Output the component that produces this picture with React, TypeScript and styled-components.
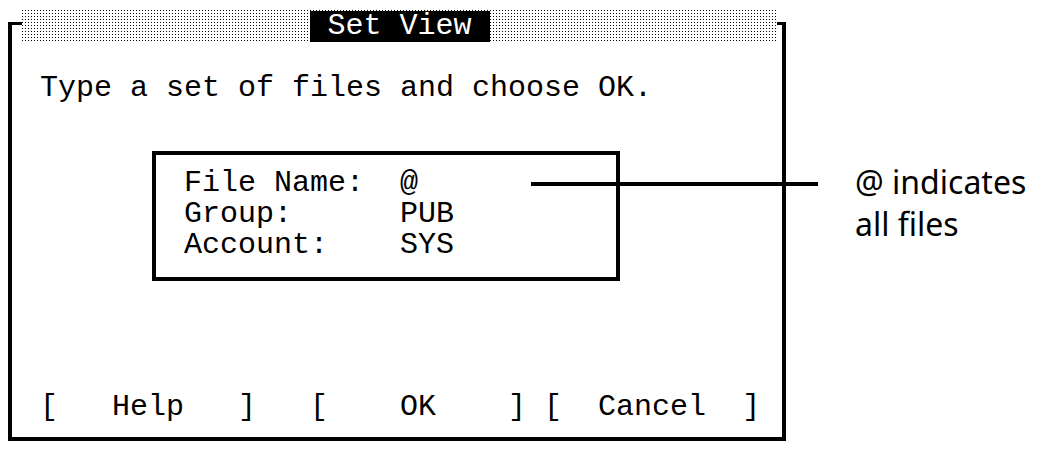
import React from "react";
import styled, { createGlobalStyle } from "styled-components";

const Global = createGlobalStyle`
  html, body { margin: 0; padding: 0; background: #fff; }
  #root { width: 1040px; height: 449px; }
`;

const Page = styled.div`
  position: relative;
  width: 1040px;
  height: 449px;
  display: flex;
  align-items: flex-start;
  background: #fff;
  color: #000;
  overflow: hidden;
`;

const Frame = styled.section`
  position: relative;
  box-sizing: border-box;
  margin: 22px 0 0 8px;
  width: 778px;
  height: 419px;
  border-style: solid;
  border-color: #000;
  border-width: 3px 4px 4px 4px;
  display: flex;
  flex-direction: column;
  padding: 48px 0 14px 28px;
  font-family: "Liberation Mono", "DejaVu Sans Mono", monospace;
  font-size: 30px;
  line-height: 31px;
  white-space: pre;
`;

const TitleBand = styled.div`
  position: absolute;
  top: -15px;
  left: 10px;
  right: 5px;
  height: 32px;
  display: flex;
  justify-content: center;
  align-items: flex-end;
  background-color: #000;
  background-image: linear-gradient(to right, transparent 1px, #fff 1px),
    linear-gradient(to bottom, transparent 1px, #fff 1px);
  background-size: 3px 3px;
`;

const Title = styled.h1`
  margin: 0;
  height: 31px;
  width: 180px;
  display: flex;
  align-items: center;
  justify-content: center;
  background: #000;
  color: #fff;
  font: inherit;
  font-size: 30px;
  line-height: 31px;
`;

const Intro = styled.p`
  margin: 0;
`;

const FieldBox = styled.div`
  box-sizing: border-box;
  margin: 47px 0 0 112px;
  width: 468px;
  height: 130px;
  border: 4px solid #000;
  padding: 13px 0 0 28px;
  display: flex;
  flex-direction: column;
`;

const FieldRow = styled.div`
  display: flex;
  height: 31px;
`;

const Label = styled.span`
  width: 216px;
`;

const Value = styled.span``;

const ButtonRow = styled.div`
  margin-top: auto;
  display: flex;
`;

const Button = styled.span<{ $gap: number }>`
  margin-right: ${(p) => p.$gap * 18}px;
`;

const Callout = styled.div`
  margin: 161px 0 0 69px;
  font-family: "Noto Sans", "Open Sans", sans-serif;
  font-size: 32px;
  line-height: 42px;
  color: #000;
`;

const Leader = styled.div`
  position: absolute;
  left: 531px;
  top: 182px;
  width: 287px;
  height: 4px;
  background: #000;
`;

export default function App() {
  return (
    <Page>
      <Global />
      <Frame>
        <TitleBand>
          <Title>Set View</Title>
        </TitleBand>
        <Intro>Type a set of files and choose OK.</Intro>
        <FieldBox>
          <FieldRow>
            <Label>File Name:</Label>
            <Value>@</Value>
          </FieldRow>
          <FieldRow>
            <Label>Group:</Label>
            <Value>PUB</Value>
          </FieldRow>
          <FieldRow>
            <Label>Account:</Label>
            <Value>SYS</Value>
          </FieldRow>
        </FieldBox>
        <ButtonRow>
          <Button $gap={3}>{"[   Help   ]"}</Button>
          <Button $gap={1}>{"[    OK    ]"}</Button>
          <Button $gap={0}>{"[  Cancel  ]"}</Button>
        </ButtonRow>
      </Frame>
      <Callout>
        @ indicates
        <br />
        all files
      </Callout>
      <Leader />
    </Page>
  );
}
